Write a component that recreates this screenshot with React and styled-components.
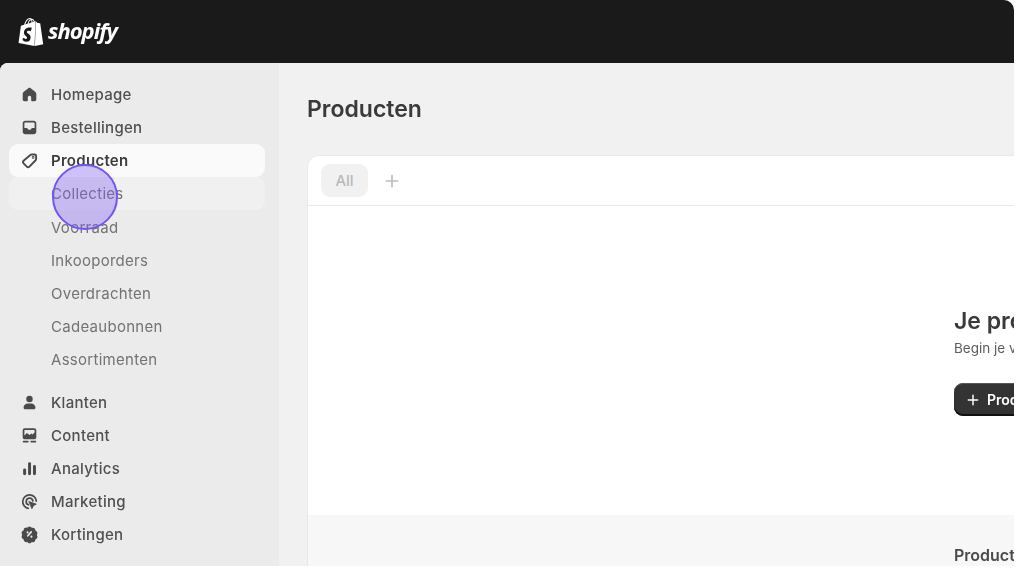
import React from 'react'
import styled, { createGlobalStyle } from 'styled-components'
import { SiShopify } from 'react-icons/si'

const GlobalStyle = createGlobalStyle`
  html, body {
    margin: 0;
    padding: 0;
    background: #fff;
    overflow: hidden;
  }
  body {
    font-family: Inter, "Liberation Sans", sans-serif;
  }
`

const Frame = styled.div`
  width: 1014px;
  height: 566px;
  background: #1a1a1a;
  border-radius: 0 10px 0 0;
  overflow: hidden;
  display: flex;
  flex-direction: column;
  filter: blur(0.6px);
  position: relative;
`

const TopBar = styled.header`
  height: 63px;
  flex: none;
  display: flex;
  align-items: center;
  gap: 3px;
  padding-left: 17px;
  color: #fff;
`

const Wordmark = styled.span`
  font-family: "Open Sans", sans-serif;
  font-size: 22px;
  font-weight: 700;
  font-style: italic;
  letter-spacing: -1px;
  line-height: 1;
  margin-top: -4px;
`

const Body = styled.div`
  flex: 1;
  min-height: 0;
  display: flex;
  border-radius: 8px 0 0 0;
  overflow: hidden;
  background: #f1f1f1;
`

const Sidebar = styled.nav`
  width: 279px;
  flex: none;
  background: #ebebeb;
  padding: 15px 14px 0 9px;
  box-sizing: border-box;
`

const NavGroup = styled.div`
  display: flex;
  flex-direction: column;
  margin-bottom: ${(p) => p.$gap || 0}px;
`

const NavRow = styled.div`
  height: 33px;
  display: flex;
  align-items: center;
  gap: 13px;
  padding-left: 12px;
  border-radius: 9px;
  font-size: 15px;
  letter-spacing: 0.28px;
  font-weight: ${(p) => (p.$active ? 600 : 500)};
  color: ${(p) => (p.$active ? '#3d3d3d' : '#505050')};
  background: ${(p) => (p.$active ? '#fafafa' : p.$hover ? '#f0f0f0' : 'transparent')};
`

const SubRow = styled(NavRow)`
  height: 33px;
  margin-bottom: ${(p) => (p.$hover ? 1 : 0)}px;
  padding-left: 42px;
  color: #737373;
  font-weight: 400;
`

const IconSlot = styled.span`
  width: 17px;
  height: 17px;
  flex: none;
  color: #4a4a4a;
  display: flex;
  align-items: center;
  justify-content: center;
`

const Main = styled.main`
  flex: 1;
  min-width: 0;
  padding: 31px 0 0 28px;
  overflow: hidden;
`

const Title = styled.h1`
  margin: 0 0 31px;
  font-size: 23px;
  line-height: 30px;
  font-weight: 600;
  color: #3a3a3a;
`

const Card = styled.section`
  width: 1000px;
  height: 480px;
  background: #fff;
  border: 1px solid #e9e9e9;
  border-radius: 12px 0 0 0;
  overflow: hidden;
`

const TabBar = styled.div`
  height: 50px;
  box-sizing: border-box;
  border-bottom: 1px solid #e9e9e9;
  display: flex;
  align-items: center;
  padding-left: 13px;
  gap: 17px;
`

const Tab = styled.span`
  width: 47px;
  height: 33px;
  border-radius: 9px;
  background: #f1f1f1;
  color: #b9b9b9;
  font-size: 15px;
  font-weight: 500;
  display: flex;
  align-items: center;
  justify-content: center;
`

const AddTab = styled.span`
  color: #bcbcbc;
  display: flex;
`

const Empty = styled.div`
  height: 309px;
  box-sizing: border-box;
  padding: 100px 0 0 646px;
  white-space: nowrap;
`

const EmptyTitle = styled.h2`
  margin: 0;
  font-size: 23px;
  line-height: 30px;
  font-weight: 600;
  color: #3a3a3a;
`

const EmptyText = styled.p`
  margin: 3px 0 0;
  font-size: 13.5px;
  line-height: 18px;
  color: #5c5c5c;
`

const PrimaryButton = styled.button`
  margin-top: 26px;
  height: 33px;
  padding: 0 14px 0 13px;
  border: 0;
  border-radius: 9px;
  background: #333;
  box-shadow: inset 0 -2px 0 #111, inset 0 1px 0 #555;
  color: #fff;
  font: 600 14px Inter, sans-serif;
  display: flex;
  align-items: center;
  gap: 8px;
`

const Footer = styled.div`
  height: 120px;
  background: #f7f7f7;
  padding: 30px 0 0 646px;
  font-size: 16px;
  line-height: 20px;
  font-weight: 600;
  color: #4a4a4a;
  white-space: nowrap;
`

const TapMarker = styled.div`
  position: absolute;
  left: 52px;
  top: 164px;
  width: 66px;
  height: 66px;
  box-sizing: border-box;
  border-radius: 50%;
  border: 2.5px solid #7256ee;
  background: rgba(128, 92, 240, 0.36);
`

const Plus = ({ size = 14 }) => (
  <svg width={size} height={size} viewBox="0 0 14 14" fill="none" stroke="currentColor" strokeWidth="1.7" strokeLinecap="round">
    <path d="M7 1.5v11M1.5 7h11" />
  </svg>
)

const Glyph = ({ size = 17, children }) => (
  <svg width={size} height={size} viewBox="0 0 20 20" fill="currentColor">{children}</svg>
)

const icons = {
  home: (
    <Glyph>
      <path d="M10 2.2c-.5 0-1 .2-1.4.5L3.3 6.9C2.5 7.5 2 8.500 2 9.500V16c0 1.100.9 2 2 2h3c.6 0 1-.4 1-1v-3.500c0-1.100.9-2 2-2s2 .9 2 2V17c0 .6.4 1 1 1h3c1.100 0 2-.9 2-2V9.500c0-1-.5-2-1.300-2.600l-5.300-4.200c-.4-.3-.9-.5-1.400-.5z" />
    </Glyph>
  ),
  inbox: (
    <Glyph>
      <path fillRule="evenodd" d="M5 2h10c1.700 0 3 1.300 3 3v10c0 1.700-1.300 3-3 3H5c-1.700 0-3-1.300-3-3V5c0-1.700 1.300-3 3-3zM4 10.500h2.600c.6 0 1.100.3 1.300.9l.2.400c.2.400.6.700 1.100.700h1.600c.5 0 .9-.3 1.100-.7l.2-.4c.2-.6.7-.9 1.300-.9H16V5c0-.6-.4-1-1-1H5c-.6 0-1 .4-1 1v5.500z" />
    </Glyph>
  ),
  tag: (
    <svg width="18" height="18" viewBox="0 0 20 20" fill="none" stroke="currentColor" strokeWidth="2.2" strokeLinejoin="round">
      <path d="M12.500 2.300h3.500c1 0 1.800.8 1.800 1.800v3.500c0 .6-.2 1.100-.6 1.500l-7.300 7.500c-.9.900-2.200.900-3.100 0l-3.800-3.800c-.9-.9-.9-2.200 0-3.100L11 2.900c.4-.4.900-.6 1.500-.6z" />
      <circle cx="14.300" cy="5.800" r="0.5" />
    </svg>
  ),
  person: (
    <Glyph>
      <circle cx="10" cy="5.800" r="3.800" />
      <path d="M3 16.200c0-3 2.400-5 5-5h4c2.600 0 5 2 5 5 0 1-.8 1.800-1.800 1.800H4.800C3.800 18 3 17.200 3 16.200z" />
    </Glyph>
  ),
  content: (
    <Glyph>
      <path fillRule="evenodd" d="M4.500 1.500h11c1.500 0 2.500 1 2.500 2.500v8c0 1.500-1 2.500-2.500 2.500h-11C3 14.500 2 13.500 2 12V4c0-1.500 1-2.500 2.500-2.500zM4 10l3-3 3 2.500 2-2 1.500 1.200L16 6.500V4c0-.3-.2-.5-.5-.5h-11c-.3 0-.5.200-.5.500v6z" />
      <rect x="2" y="16.200" width="7" height="2" rx="1" />
      <rect x="11" y="16.200" width="7" height="2" rx="1" />
    </Glyph>
  ),
  chart: (
    <Glyph>
      <rect x="2.500" y="10" width="3.500" height="8" rx="1.700" />
      <rect x="8.300" y="2.500" width="3.500" height="15.500" rx="1.700" />
      <rect x="14.100" y="6" width="3.500" height="12" rx="1.700" />
    </Glyph>
  ),
  target: (
    <svg width="18" height="18" viewBox="0 0 20 20" fill="none" stroke="currentColor" strokeWidth="2" strokeLinecap="round">
      <path d="M8.500 17.500A8 8 0 1 1 18 9" />
      <path d="M8.800 13.300A4 4 0 1 1 14 8.800" />
      <path d="M9.500 9.500l8.500 3-3.300 1.700-1.700 3.300z" fill="currentColor" strokeWidth="1" strokeLinejoin="round" />
    </svg>
  ),
  discount: (
    <Glyph size={19}>
      <path fillRule="evenodd" d="M8.300 1.300c1-.8 2.400-.8 3.400 0l1 .8 1.300-.1c1.300 0 2.400.9 2.700 2.100l.3 1.300 1.100.7c1.100.7 1.500 2.100 1 3.300l-.5 1.200.5 1.200c.5 1.200.1 2.600-1 3.300l-1.100.7-.3 1.300c-.3 1.200-1.400 2.100-2.700 2.100L13 18.900l-1.300.8c-1 .8-2.400.8-3.400 0l-1-.8-1.300.1c-1.300 0-2.400-.9-2.700-2.100L3 15.600l-1.100-.7c-1.100-.7-1.500-2.100-1-3.300l.5-1.200-.5-1.200c-.5-1.200-.1-2.600 1-3.300L3 5.200l.3-1.300C3.600 2.700 4.700 1.800 6 1.800l1.300.3 1-.8zM12.700 6.300a1 1 0 0 0-1.400 0l-4 4.600a1 1 0 1 0 1.500 1.300l4-4.600a1 1 0 0 0-.1-1.300zM7.700 8.700a1.200 1.200 0 1 0 0-2.400 1.200 1.200 0 0 0 0 2.400zm4.600 5a1.200 1.200 0 1 0 0-2.400 1.200 1.200 0 0 0 0 2.400z" />
    </Glyph>
  ),
}

const topItems = [
  { label: 'Homepage', icon: 'home' },
  { label: 'Bestellingen', icon: 'inbox' },
]
const subItems = ['Voorraad', 'Inkooporders', 'Overdrachten', 'Cadeaubonnen', 'Assortimenten']
const lowerItems = [
  { label: 'Klanten', icon: 'person' },
  { label: 'Content', icon: 'content' },
  { label: 'Analytics', icon: 'chart' },
  { label: 'Marketing', icon: 'target' },
  { label: 'Kortingen', icon: 'discount' },
]

const App = () => (
  <>
    <GlobalStyle />
    <Frame>
      <TopBar>
        <SiShopify size={28} />
        <Wordmark>shopify</Wordmark>
      </TopBar>
      <Body>
        <Sidebar>
          <NavGroup $gap={10}>
            {topItems.map((item) => (
              <NavRow key={item.label}>
                <IconSlot>{icons[item.icon]}</IconSlot>
                {item.label}
              </NavRow>
            ))}
            <NavRow $active>
              <IconSlot>{icons.tag}</IconSlot>
              Producten
            </NavRow>
            <SubRow $hover>Collecties</SubRow>
            {subItems.map((label) => (
              <SubRow key={label}>{label}</SubRow>
            ))}
          </NavGroup>
          <NavGroup>
            {lowerItems.map((item) => (
              <NavRow key={item.label}>
                <IconSlot>{icons[item.icon]}</IconSlot>
                {item.label}
              </NavRow>
            ))}
          </NavGroup>
        </Sidebar>
        <Main>
          <Title>Producten</Title>
          <Card>
            <TabBar>
              <Tab>All</Tab>
              <AddTab><Plus /></AddTab>
            </TabBar>
            <Empty>
              <EmptyTitle>Je producten</EmptyTitle>
              <EmptyText>Begin je verkoop</EmptyText>
              <PrimaryButton><Plus size={12} />Product toevoegen</PrimaryButton>
            </Empty>
            <Footer>Producten</Footer>
          </Card>
        </Main>
      </Body>
      <TapMarker />
    </Frame>
  </>
)

export default App
